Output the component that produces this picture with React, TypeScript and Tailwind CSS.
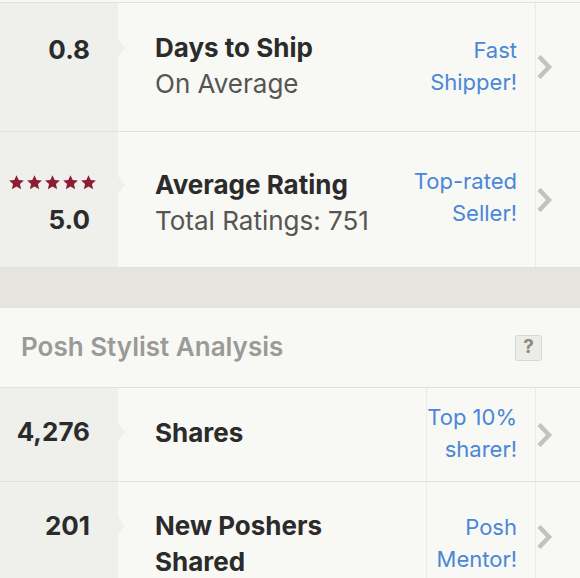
import React from "react";

const FONT = { fontFamily: "Inter, 'Open Sans', sans-serif" };

function Chevron() {
  return (
    <svg width="17" height="26" viewBox="0 0 17 26" className="shrink-0">
      <path d="M3 2.5 L13 13 L3 23.5" fill="none" stroke="#c2c2be" strokeWidth="4.5" />
    </svg>
  );
}

function Stars() {
  const star =
    "M6.5 0.2 L8.4 4.4 L12.9 4.8 L9.5 7.8 L10.5 12.4 L6.5 10 L2.5 12.4 L3.5 7.8 L0.1 4.8 L4.6 4.4 Z";
  return (
    <div className="flex gap-[3px] justify-end -mr-[6px]">
      {[0, 1, 2, 3, 4].map((i) => (
        <svg key={i} width="15" height="15" viewBox="0 0 13 13">
          <path d={star} fill="#8b1e32" />
        </svg>
      ))}
    </div>
  );
}

function Notch({ top }: { top: number }) {
  return (
    <div
      className="absolute left-[118px] w-0 h-0 border-y-[9px] border-y-transparent border-l-[7px] border-l-[#efefeb]"
      style={{ top }}
    />
  );
}

type RowProps = {
  left: React.ReactNode;
  title: React.ReactNode;
  badge: React.ReactNode;
  height: string;
  notch: number;
  split?: boolean;
  leftPad: string;
};

function Row({ left, title, badge, height, notch, split, leftPad }: RowProps) {
  return (
    <div className={`relative flex border-b border-[#e2e1dc] ${height}`}>
      <div className={`w-[118px] shrink-0 bg-[#efefeb] pr-[28px] text-right ${leftPad}`}>{left}</div>
      <Notch top={notch} />
      <div className="flex-1 flex items-center pl-[37px]">{title}</div>
      <div
        className={`flex items-center justify-end pr-[18px] text-right text-[22px] leading-[32px] text-[#4a87d8] ${
          split ? "w-[109px] border-l border-[#eaeae6]" : ""
        }`}
      >
        {badge}
      </div>
      <div className="w-[45px] shrink-0 border-l border-[#eaeae6] flex items-center">
        <Chevron />
      </div>
    </div>
  );
}

export default function App() {
  return (
    <div className="w-[580px] h-[578px] overflow-hidden bg-[#f8f8f5] text-[#2b2b2b]" style={FONT}>
      <div className="h-[2px] bg-[#f8f8f5]" />
      <div className="border-t border-[#e2e1dc]">
        <Row
          height="h-[129px]"
          notch={36}
          leftPad="pt-[30px]"
          left={<p className="text-[26px] font-bold leading-[34px]">0.8</p>}
          title={
            <div className="-mt-[2px]">
              <p className="text-[26px] font-bold leading-[36px]">Days to Ship</p>
              <p className="text-[26px] leading-[36px] text-[#555553]">On Average</p>
            </div>
          }
          badge={
            <div className="-mt-[3px]">
              <p>Fast</p>
              <p>Shipper!</p>
            </div>
          }
        />
        <Row
          height="h-[136px]"
          notch={44}
          leftPad="pt-[43px]"
          left={
            <div>
              <Stars />
              <p className="text-[26px] font-bold leading-[34px] mt-[13px]">5.0</p>
            </div>
          }
          title={
            <div className="mt-[6px]">
              <p className="text-[26px] font-bold leading-[36px]">Average Rating</p>
              <p className="text-[26px] leading-[36px] text-[#555553]">Total Ratings: 751</p>
            </div>
          }
          badge={
            <div className="-mt-[5px]">
              <p>Top-rated</p>
              <p>Seller!</p>
            </div>
          }
        />
      </div>

      {/* gap band */}
      <div className="h-[40px] bg-[#e6e4df]" />

      {/* section header */}
      <div className="h-[80px] flex items-center justify-between pl-[21px] pr-[38px] border-b border-[#e2e1dc]">
        <p className="text-[26px] font-semibold text-[#9a9a97] -mt-[3px]">Posh Stylist Analysis</p>
        <div className="w-[27px] h-[26px] rounded-[3px] bg-[#ecece8] border border-[#d6d6d2] flex items-center justify-center text-[19px] font-bold text-[#8a8a87]">
          ?
        </div>
      </div>

      <Row
        height="h-[94px]"
        notch={35}
        leftPad="pt-[27px]"
        split
        left={<p className="text-[26px] font-bold leading-[34px]">4,276</p>}
        title={<p className="text-[26px] font-bold leading-[36px] -mt-[4px]">Shares</p>}
        badge={
          <div className="-mt-[3px]">
            <p>Top 10%</p>
            <p>sharer!</p>
          </div>
        }
      />
      <Row
        height="h-[110px]"
        notch={35}
        leftPad="pt-[27px]"
        split
        left={<p className="text-[26px] font-bold leading-[34px]">201</p>}
        title={
          <div className="self-start pt-[26px]">
            <p className="text-[26px] font-bold leading-[36px]">New Poshers</p>
            <p className="text-[26px] font-bold leading-[36px]">Shared</p>
          </div>
        }
        badge={
          <div className="self-start pt-[29px]">
            <p>Posh</p>
            <p>Mentor!</p>
          </div>
        }
      />
    </div>
  );
}
